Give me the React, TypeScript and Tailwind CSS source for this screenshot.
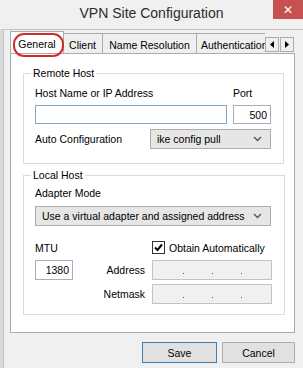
import type { JSX } from 'react';

function Chevron(): JSX.Element {
  return (
    <svg width="9" height="6" viewBox="0 0 9 6" className="shrink-0">
      <path d="M1 1 L4.5 4.5 L8 1" fill="none" stroke="#555" strokeWidth="1.4" />
    </svg>
  );
}

function Select({ value, className }: { value: string; className: string }): JSX.Element {
  return (
    <div className={`flex items-center justify-between h-[20px] bg-[#e6e6e6] border border-[#acacac] pl-[6px] pr-[8px] whitespace-nowrap ${className}`}>
      <span>{value}</span>
      <Chevron />
    </div>
  );
}

function IpField(): JSX.Element {
  return (
    <div className="flex items-end w-[120px] h-[20px] bg-[#f0f0f0] border border-[#c3c3c3] pb-[5px] pl-[30px] gap-[28px]">
      <span className="w-[1px] h-[1px] bg-[#555]" />
      <span className="w-[1px] h-[1px] bg-[#555]" />
      <span className="w-[1px] h-[1px] bg-[#555]" />
    </div>
  );
}

function GroupBox({ title, className, children }: { title: string; className?: string; children: React.ReactNode }): JSX.Element {
  return (
    <fieldset className={`border border-[#dcdcdc] px-[11px] ${className ?? ''}`}>
      <legend className="ml-[-4px] px-[2px] leading-[12px]">{title}</legend>
      {children}
    </fieldset>
  );
}

export default function App(): JSX.Element {
  return (
    <div className="relative w-[303px] h-[368px] overflow-hidden bg-[#f0f0f0] text-[10.5px] leading-[12px] text-black font-['Liberation_Sans',Arial,sans-serif]">
      {/* title bar */}
      <div className="relative h-[29px] flex justify-center pt-[5px]">
        <span className="text-[14px] leading-[16px] text-[#2b2b2b]">VPN Site Configuration</span>
        <div className="absolute top-0 right-0 w-[30px] h-[19px] bg-[#c75050] flex items-center justify-center text-white text-[12px]">
          ✕
        </div>
      </div>

      <div className="flex h-[339px]">
        <div className="w-[3px] bg-[#d9d9d9]" />
        <div className="flex-1 border-l border-t border-[#c4c4c4] pl-[6px] pt-[1px]">
          {/* tabs */}
          <div className="flex items-end h-[22px]">
            <div className="flex items-end w-[255px] h-[22px] overflow-hidden">
              <div className="relative z-10 flex justify-center pt-[6px] w-[54px] h-[23px] -mb-px bg-white border-l border-t border-r border-[#acacac] shrink-0">
                General
              </div>
              <div className="flex justify-center pt-[5px] w-[41px] h-[20px] -ml-[2px] bg-[#efefef] border-l border-t border-r border-[#acacac] shrink-0">
                Client
              </div>
              <div className="flex justify-center pt-[5px] w-[95px] h-[20px] -ml-px bg-[#efefef] border-l border-t border-r border-[#acacac] shrink-0">
                Name Resolution
              </div>
              <div className="flex pl-[4px] pt-[5px] w-[90px] h-[20px] -ml-px bg-[#efefef] border-l border-t border-r border-[#acacac] shrink-0 whitespace-nowrap">
                Authentication
              </div>
            </div>
            <div className="flex gap-[1px] mb-[1px]">
              <div className="w-[14px] h-[15px] flex items-center justify-center bg-[#efefef] border border-[#acacac]">
                <svg width="4" height="7" viewBox="0 0 4 7"><path d="M4 0 L0 3.5 L4 7 Z" fill="#000" /></svg>
              </div>
              <div className="w-[14px] h-[15px] flex items-center justify-center bg-[#efefef] border border-[#acacac]">
                <svg width="4" height="7" viewBox="0 0 4 7"><path d="M0 0 L4 3.5 L0 7 Z" fill="#000" /></svg>
              </div>
            </div>
          </div>

          {/* tab panel */}
          <div className="w-[285px] h-[280px] bg-white border border-[#acacac] pl-[12px] pt-[13px]">
            <GroupBox title="Remote Host" className="w-[261px] pr-[12px] pb-[14px]">
              <div className="flex gap-[6px] pt-[8px]">
                <div className="flex flex-col w-[192px]">
                  <span>Host Name or IP Address</span>
                  <div className="mt-[6px] h-[19px] border border-[#86a8c8] bg-white" />
                </div>
                <div className="flex flex-col w-[38px]">
                  <span>Port</span>
                  <div className="mt-[6px] h-[19px] border border-[#abadb3] bg-white text-right pr-[3px] pt-[3px]">500</div>
                </div>
              </div>
              <div className="flex items-center justify-between mt-[5px]">
                <span>Auto Configuration</span>
                <Select value="ike config pull" className="w-[121px]" />
              </div>
            </GroupBox>

            <GroupBox title="Local Host" className="w-[261px] pr-[12px] pb-[10px] mt-[5px]">
              <div className="pt-[6px]">Adapter Mode</div>
              <Select value="Use a virtual adapter and assigned address" className="mt-[7px] w-[236px]" />
              <div className="flex items-center mt-[15px] h-[13px]">
                <span className="w-[117px]">MTU</span>
                <div className="w-[13px] h-[13px] border border-[#333] bg-white flex items-center justify-center">
                  <svg width="11" height="11" viewBox="0 0 11 11">
                    <path d="M2 5.5 L4.5 8 L9 2.5" fill="none" stroke="#000" strokeWidth="2" />
                  </svg>
                </div>
                <span className="ml-[4px]">Obtain Automatically</span>
              </div>
              <div className="flex items-center mt-[6px]">
                <div className="w-[38px] h-[20px] border border-[#abadb3] bg-white text-right pr-[3px] pt-[3px]">1380</div>
                <span className="w-[72px] text-right">Address</span>
                <div className="ml-[7px]"><IpField /></div>
              </div>
              <div className="flex items-center mt-[4px]">
                <span className="w-[110px] text-right">Netmask</span>
                <div className="ml-[7px]"><IpField /></div>
              </div>
            </GroupBox>
          </div>

          {/* buttons */}
          <div className="flex justify-end gap-[5px] w-[285px] mt-[9px]">
            <button className="w-[75px] h-[21px] bg-[#e1e1e1] border border-[#3c7fb1]">Save</button>
            <button className="w-[73px] h-[21px] bg-[#e1e1e1] border border-[#adadad]">Cancel</button>
          </div>
        </div>
      </div>

      {/* annotation highlight round the selected tab */}
      <div className="absolute left-[13px] top-[33px] w-[51px] h-[24px] rounded-[11px] border-[2.5px] border-[#d42a2a] z-20" />
    </div>
  );
}
